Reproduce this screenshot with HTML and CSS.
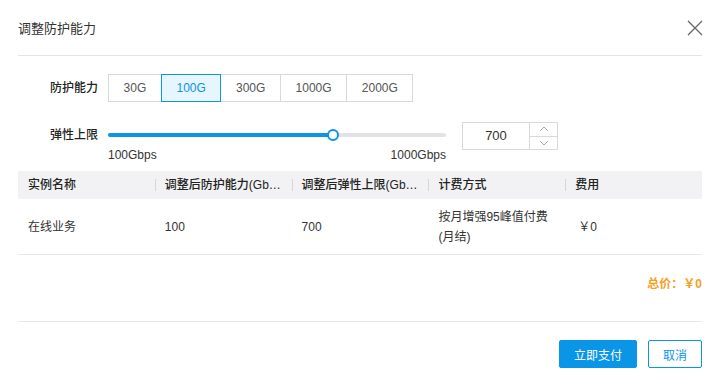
FILE: index.html
```html
<!DOCTYPE html>
<html lang="zh">
<head>
<meta charset="utf-8">
<title>调整防护能力</title>
<link rel="stylesheet" href="styles.css">
</head>
<body>
<div class="dialog">
  <div class="header">
    <span class="title">调整防护能力</span>
    <svg class="close" width="16" height="16" viewBox="0 0 16 16"><path d="M1 1L15 15M15 1L1 15" stroke="#666" stroke-width="1.3" fill="none"/></svg>
  </div>

  <div class="form">
    <div class="row">
      <div class="label">防护能力</div>
      <div class="seg">
        <span class="opt">30G</span>
        <span class="opt active">100G</span>
        <span class="opt">300G</span>
        <span class="opt">1000G</span>
        <span class="opt">2000G</span>
      </div>
    </div>
    <div class="row slider-row">
      <div class="label">弹性上限</div>
      <div class="slider">
        <div class="track-area">
          <div class="track"><div class="fill" style="width:225px"></div><span class="handle"></span></div>
        </div>
        <div class="ticks"><span>100Gbps</span><span>1000Gbps</span></div>
      </div>
      <div class="num">
        <div class="num-val">700</div>
        <div class="spin">
          <span class="spin-btn"><svg width="10" height="6" viewBox="0 0 10 6"><path d="M1 5L5 1L9 5" stroke="#aaa" fill="none"/></svg></span>
          <span class="spin-btn"><svg width="10" height="6" viewBox="0 0 10 6"><path d="M1 1L5 5L9 1" stroke="#aaa" fill="none"/></svg></span>
        </div>
      </div>
    </div>
  </div>

  <div class="table">
    <div class="th">实例名称</div>
    <div class="th sep">调整后防护能力(Gbps)</div>
    <div class="th sep">调整后弹性上限(Gbps)</div>
    <div class="th sep">计费方式</div>
    <div class="th sep">费用</div>
    <div class="td">在线业务</div>
    <div class="td">100</div>
    <div class="td">700</div>
    <div class="td">按月增强95峰值付费<br>(月结)</div>
    <div class="td">￥0</div>
  </div>

  <div class="total">总价：￥0</div>

  <div class="footer">
    <button class="btn primary">立即支付</button>
    <button class="btn">取消</button>
  </div>
</div>
</body>
</html>
```
FILE: styles.css
```css
* { box-sizing: border-box; }
html, body { margin: 0; background: #fff; }
body {
  font-family: "Liberation Sans", Arial, "Noto Sans CJK SC", sans-serif;
  font-size: 12px;
  color: #333;
}
.dialog { padding: 0 18px; }
.header {
  height: 56px;
  display: flex;
  align-items: center;
  justify-content: space-between;
  border-bottom: 1px solid #e5e5e5;
}
.title { font-size: 13px; color: #333; }
.close { margin-right: -1px; }

.form { padding-top: 18px; }
.row { display: flex; align-items: flex-start; }
.label {
  width: 90px;
  padding-right: 10px;
  text-align: right;
  line-height: 28px;
  font-weight: 500;
  color: #222;
}
.seg { display: flex; }
.opt {
  height: 28px;
  line-height: 26px;
  padding: 0 14.6px;
  border: 1px solid #d9d9d9;
  margin-left: -1px;
  color: #555;
  background: #fff;
}
.opt:first-child { margin-left: 0; }
.opt.active {
  border-color: #0a95e6;
  background: #e6f6ff;
  color: #0a95e6;
  position: relative;
  z-index: 1;
}
.slider-row { margin-top: 20px; }
.slider-row .label { line-height: 26px; }
.slider { width: 338px; }
.track-area { height: 26px; display: flex; align-items: center; }
.track {
  position: relative;
  width: 100%;
  height: 4px;
  background: #e3e3e3;
  border-radius: 2px;
}
.fill { height: 4px; background: #0a95e6; border-radius: 2px; }
.handle {
  position: absolute;
  left: 219px;
  top: -4px;
  width: 12px;
  height: 12px;
  border-radius: 50%;
  border: 2px solid #0a95e6;
  background: #fff;
}
.ticks {
  display: flex;
  justify-content: space-between;
  line-height: 14px;
  color: #333;
}
.num {
  margin-left: 16px;
  width: 96px;
  height: 28px;
  border: 1px solid #d9d9d9;
  display: flex;
}
.num-val {
  flex: 1;
  text-align: center;
  line-height: 26px;
  font-size: 13px;
  color: #333;
}
.spin {
  width: 28px;
  border-left: 1px solid #d9d9d9;
  display: flex;
  flex-direction: column;
}
.spin-btn {
  flex: 1;
  display: flex;
  align-items: center;
  justify-content: center;
}
.spin-btn + .spin-btn { border-top: 1px solid #d9d9d9; }

.table {
  margin-top: 9px;
  display: grid;
  grid-template-columns: repeat(5, 1fr);
  border-bottom: 1px solid #e8e8e8;
}
.th {
  height: 28px;
  line-height: 28px;
  padding: 0 10px;
  background-color: #f2f2f4;
  font-weight: 500;
  white-space: nowrap;
  overflow: hidden;
  text-overflow: ellipsis;
  color: #222;
}
.th.sep {
  background-image: linear-gradient(#d6d6d6, #d6d6d6);
  background-size: 1px 12px;
  background-position: left center;
  background-repeat: no-repeat;
}
.td {
  height: 55px;
  display: flex;
  align-items: center;
  padding: 0 10px;
  line-height: 20px;
  color: #333;
}
.td:last-child { padding-left: 13px; }

.total {
  margin-top: 19px;
  line-height: 20px;
  text-align: right;
  color: #f5a01f;
  font-weight: bold;
}
.footer {
  margin-top: 27px;
  border-top: 1px solid #e8e8e8;
  padding-top: 18px;
  display: flex;
  justify-content: flex-end;
  gap: 11px;
}
.btn {
  height: 28px;
  padding: 0 14px;
  font-family: inherit;
  font-size: 12px;
  border: 1px solid #0a95e6;
  background: #fff;
  color: #0a95e6;
  border-radius: 2px;
}
.btn.primary { background: #0a95e6; color: #fff; }
```
